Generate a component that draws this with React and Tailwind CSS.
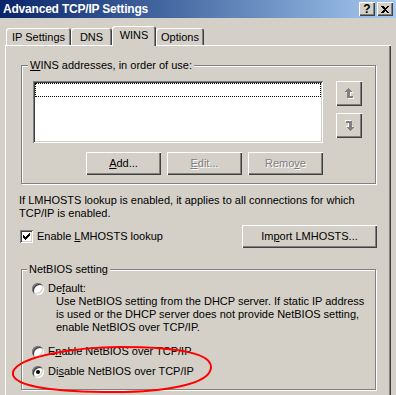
const raised = 'shadow-[inset_1px_1px_0_#ffffff,inset_-1px_-1px_0_#404040,inset_-2px_-2px_0_#808080]';
const sunken = 'shadow-[inset_1px_1px_0_#808080,inset_-1px_-1px_0_#ffffff,inset_2px_2px_0_#404040,inset_-2px_-2px_0_#d4d0c8]';
const etched = 'border border-[#808080] shadow-[1px_1px_0_#ffffff,inset_1px_1px_0_#ffffff]';
const disabled = 'text-[#808080] [text-shadow:1px_1px_0_#ffffff]';

function Btn({ children, className = '', off = false }) {
  return (
    <div className={`flex items-center justify-center bg-[#D4D0C8] ${raised} ${off ? disabled : ''} ${className}`}>
      {children}
    </div>
  );
}

function Radio({ checked }) {
  return (
    <div className={`relative w-[12px] h-[12px] shrink-0 rounded-full bg-white ${sunken}`}>
      {checked && <div className="absolute left-[4px] top-[4px] w-[4px] h-[4px] rounded-full bg-black" />}
    </div>
  );
}

function ArrowShape({ fill, dx = 0 }) {
  return (
    <g fill={fill} transform={`translate(${dx},${dx})`}>
      <rect x="3" y="0" width="1" height="1" />
      <rect x="2" y="1" width="3" height="1" />
      <rect x="1" y="2" width="5" height="1" />
      <rect x="0" y="3" width="7" height="1" />
      <rect x="2" y="4" width="3" height="6" />
      <rect x="2" y="8" width="6" height="2" />
    </g>
  );
}

function Arrow({ down }) {
  return (
    <svg width="9" height="11" viewBox="0 0 9 11" className={down ? 'rotate-180' : ''} shapeRendering="crispEdges">
      <ArrowShape fill="#ffffff" dx={1} />
      <ArrowShape fill="#808080" />
    </svg>
  );
}

function Tab({ label, active, w }) {
  if (active) {
    return (
      <div className={`relative top-[1px] z-10 h-[20px] ${w} flex justify-center pt-[3px] rounded-t-[3px] bg-[#D4D0C8] shadow-[inset_1px_1px_0_#ffffff,inset_-1px_0_0_#404040,inset_-2px_0_0_#808080]`}>
        {label}
      </div>
    );
  }
  return (
    <div className={`h-[17px] ${w} flex justify-center pt-[3px] rounded-t-[3px] bg-[#D4D0C8] shadow-[inset_1px_1px_0_#ffffff,inset_-1px_0_0_#404040,inset_-2px_0_0_#808080]`}>
      {label}
    </div>
  );
}

export default function App() {
  return (
    <div className="relative w-[396px] h-[395px] overflow-hidden bg-[#D4D0C8] text-black text-[11px] leading-[13px] font-['Tahoma','Liberation_Sans',sans-serif]">
      {/* title bar */}
      <div className="h-[18px] flex items-center pl-[3px] pr-[3px] bg-gradient-to-r from-[#0A246A] to-[#A6CAF0]">
        <span className="text-white font-bold text-[12px] tracking-[-0.2px]">Advanced TCP/IP Settings</span>
        <div className="ml-auto flex gap-[2px]">
          <Btn className="w-[16px] h-[14px] font-bold text-[12px] leading-[12px]">?</Btn>
          <Btn className="w-[16px] h-[14px]">
            <svg width="8" height="7" viewBox="0 0 8 7" shapeRendering="crispEdges">
              <path d="M0 0h2l2 2 2-2h2L5 3.5 8 7H6L4 5 2 7H0l3-3.5z" fill="#000" />
            </svg>
          </Btn>
        </div>
      </div>

      {/* tabs */}
      <div className="h-[27px] flex items-end pl-[6px]">
        <Tab label="IP Settings" w="w-[65px]" />
        <Tab label="DNS" w="w-[41px]" />
        <Tab label="WINS" w="w-[44px]" active />
        <Tab label="Options" w="w-[48px]" />
      </div>

      {/* panel */}
      <div className="ml-[5px] w-[386px] h-[360px] pl-[14px] pt-[20px] shadow-[inset_1px_1px_0_#ffffff,inset_-1px_-1px_0_#404040,inset_-2px_-2px_0_#808080]">
        <div className={`relative ml-[2px] w-[355px] h-[119px] ${etched} pl-[11px] pt-[15px]`}>
          <span className="absolute left-[6px] -top-[7px] px-[2px] bg-[#D4D0C8]">
            <span className="underline">W</span>INS addresses, in order of use:
          </span>
          <div className="flex">
            <div className="w-[290px]">
              <div className={`h-[62px] bg-white p-[2px] ${sunken}`}>
                <div className="h-[14px] border border-dotted border-black" />
              </div>
              <div className="mt-[9px] flex justify-end gap-[6px]">
                <Btn className="w-[75px] h-[23px]"><span><span className="underline">A</span>dd...</span></Btn>
                <Btn className="w-[75px] h-[23px]" off><span><span className="underline">E</span>dit...</span></Btn>
                <Btn className="w-[75px] h-[23px]" off><span>Remo<span className="underline">v</span>e</span></Btn>
              </div>
            </div>
            <div className="ml-[13px] flex flex-col gap-[7px]">
              <Btn className="w-[26px] h-[25px]"><Arrow /></Btn>
              <Btn className="w-[26px] h-[25px]"><Arrow down /></Btn>
            </div>
          </div>
        </div>

        <p className="mt-[10px]">
          If LMHOSTS lookup is enabled, it applies to all connections for which<br />
          TCP/IP is enabled.
        </p>

        <div className="mt-[5px] w-[358px] h-[23px] flex items-center">
          <div className={`ml-[1px] w-[13px] h-[13px] bg-white flex items-center justify-center ${sunken}`}>
            <svg width="7" height="7" viewBox="0 0 7 7" shapeRendering="crispEdges">
              <path d="M0 2h1v1h1v1h1V3h1V2h1V1h1V0h1v3H6v1H5v1H4v1H3v1H2V6H1V5H0z" fill="#000" />
            </svg>
          </div>
          <span className="ml-[4px]">Enable <span className="underline">L</span>MHOSTS lookup</span>
          <Btn className="ml-auto w-[135px] h-[23px]"><span>Im<span className="underline">p</span>ort LMHOSTS...</span></Btn>
        </div>

        <div className={`relative ml-[2px] mt-[21px] w-[355px] h-[121px] ${etched} pl-[10px] pt-[12px]`}>
          <span className="absolute left-[5px] -top-[7px] px-[2px] bg-[#D4D0C8]">NetBIOS setting</span>
          <div className="h-[13px] flex items-center gap-[4px]">
            <Radio />
            <span>De<span className="underline">f</span>ault:</span>
          </div>
          <p className="ml-[24px]">
            Use NetBIOS setting from the DHCP server. If static IP address<br />
            is used or the DHCP server does not provide NetBIOS setting,<br />
            enable NetBIOS over TCP/IP.
          </p>
          <div className="mt-[11px] h-[13px] flex items-center gap-[4px]">
            <Radio />
            <span>E<span className="underline">n</span>able NetBIOS over TCP/IP</span>
          </div>
          <div className="mt-[7px] h-[13px] flex items-center gap-[4px]">
            <Radio checked />
            <span>Di<span className="underline">s</span>able NetBIOS over TCP/IP</span>
          </div>
        </div>
      </div>

      {/* red annotation */}
      <svg className="absolute left-0 top-0 pointer-events-none" width="396" height="395" viewBox="0 0 396 395">
        <path
          d="M13 372 C18 356, 78 347, 120 347 C170 347, 211 352, 211 367 C211 385, 162 392, 115 392 C62 392, 10 388, 13 372 Z"
          fill="none"
          stroke="#ff0000"
          strokeWidth="2"
        />
      </svg>
    </div>
  );
}
